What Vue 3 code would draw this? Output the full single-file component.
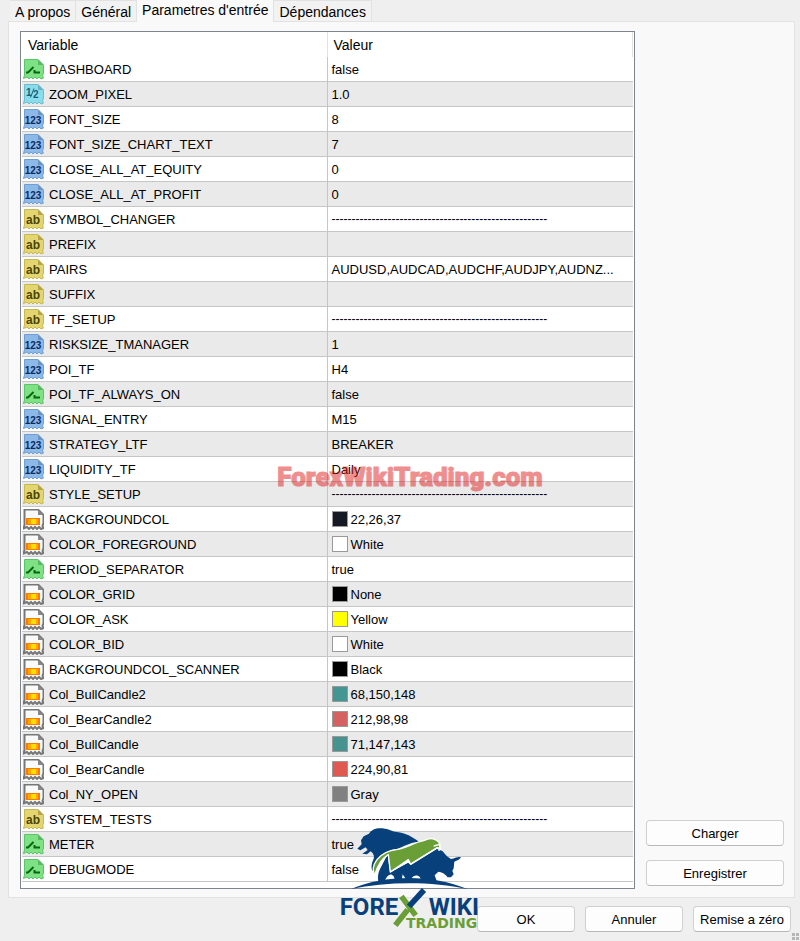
<template>
  <main class="dialog">
    <nav class="tabs" role="tablist">
      <button
        v-for="tab in tabs"
        :key="tab"
        type="button"
        role="tab"
        class="tab"
        :class="{ active: tab === activeTab }"
        :aria-selected="tab === activeTab"
        @click="activeTab = tab"
      >{{ tab }}</button>
    </nav>

    <section class="panel">
      <div class="list">
        <table>
          <thead>
            <tr>
              <th scope="col">Variable</th>
              <th scope="col">Valeur</th>
            </tr>
          </thead>
          <tbody>
            <tr v-for="row in rows" :key="row.name">
              <td>
                <div class="cell">
                  <svg class="icon" :class="row.type" viewBox="0 0 21 21" aria-hidden="true">
                    <path class="sheet" d="M1.5 .5H15L20.5 6V14L19.5 17L20.5 19L18 20L16 18L14 20L12 18L10 20L8 18L6 20L4 18L.5 19.5L1.5 16Z" />
                    <path class="fold" d="M15 .5V6H20.5Z" />
                    <path v-if="row.type === 'bool'" class="mark" d="M3 13.5H5L10.5 8M11.5 11V13.5H17" />
                    <template v-else-if="row.type === 'color'">
                      <rect x="3" y="9" width="14" height="7" fill="#ff7800" />
                      <rect x="5" y="10" width="10" height="5" fill="#ffa800" />
                      <rect x="8" y="10" width="5" height="5" fill="#ffe000" />
                    </template>
                    <template v-else-if="row.type === 'real'">
                      <text class="glyph" x="3" y="12">1</text>
                      <path class="slash" d="M7.5 13.5L11 4.5" />
                      <text class="glyph" x="10" y="14">2</text>
                    </template>
                    <text v-else class="glyph" x="10" y="15" text-anchor="middle">{{ glyphs[row.type] }}</text>
                  </svg>
                  <span>{{ row.name }}</span>
                </div>
              </td>
              <td>
                <div class="cell value" :class="{ dashes: row.value === dashes }">
                  <i v-if="row.swatch" class="swatch" :style="{ background: row.swatch }"></i>
                  <span>{{ row.value }}</span>
                </div>
              </td>
            </tr>
          </tbody>
        </table>
      </div>
      <div class="side">
        <button type="button" class="btn">Charger</button>
        <button type="button" class="btn">Enregistrer</button>
      </div>
    </section>

    <footer class="footer">
      <button type="button" class="btn">OK</button>
      <button type="button" class="btn">Annuler</button>
      <button type="button" class="btn">Remise a zéro</button>
    </footer>

    <span class="watermark">ForexWikiTrading.com</span>

    <svg class="logo" viewBox="0 0 510 378" role="img" aria-label="Forex Wiki Trading">
      <!-- bear -->
      <path fill="#08407c" d="M97 101L110 88L108 76L116 64L132 56C140 42 158 37 180 41C195 43 202 50 216 51C242 54 262 65 281 80C255 82 236 94 216 102C194 103 174 116 162 132L148 160L142 168C138 158 139 145 146 131C149 122 144 114 137 109L126 118L112 116L128 105L122 97L106 106Z" />
      <!-- bull -->
      <path fill="#08407c" d="M160 200C157 184 160 173 165 162L188 118L195 172L255 140L330 100L352 108L366 124L378 132C390 130 398 124 408 127C404 135 396 136 388 140C386 152 388 160 382 167L386 178L378 187L368 187C360 176 350 171 340 170L329 181L336 200H290L285 187C278 178 264 181 260 190L256 200H247L240 188L233 178L231 190L236 200H212L206 184C198 174 187 178 178 200Z" />
      <path fill="#6a9f37" stroke="#fff" stroke-width="4" stroke-linejoin="round" d="M149 181C136 154 156 110 218 103C245 98 270 82 298 76C316 67 332 72 342 82L347 103L338 98L257 148L250 134L196 171L190 119C169 132 157 151 149 181Z" />
      <path fill="none" stroke="#fff" stroke-width="4" d="M196 171L249 140L257 147L337 98M326 93L345 88L342 108" />
      <path fill="#08407c" d="M78 222C180 178 322 178 427 222C320 199 187 199 78 222Z" />
      <g class="forex">
        <text x="44" y="299">FORE</text>
        <text x="311" y="299">WIKI</text>
      </g>
      <path fill="none" stroke="#6a9f37" stroke-width="17" d="M229 244L272 301M211 331L248 284" />
      <path fill="none" stroke="#08407c" stroke-width="17" d="M252 274L297 225" />
      <text class="trading" x="243" y="338">TRADING</text>
    </svg>

    <svg class="grip" viewBox="0 0 8 8" aria-hidden="true">
      <path fill="#b6b6b6" d="M0 0h3v3H0zM4 0h3v3H4zM0 4h3v3H0zM4 4h3v3H4z" />
    </svg>
  </main>
</template>

<script setup>
import { ref } from 'vue';

const tabs = ['A propos', 'Général', "Parametres d'entrée", 'Dépendances'];
const activeTab = ref("Parametres d'entrée");

const glyphs = { int: '123', text: 'ab' };
const dashes = '-'.repeat(54);

const rows = [
  { type: 'bool', name: 'DASHBOARD', value: 'false' },
  { type: 'real', name: 'ZOOM_PIXEL', value: '1.0' },
  { type: 'int', name: 'FONT_SIZE', value: '8' },
  { type: 'int', name: 'FONT_SIZE_CHART_TEXT', value: '7' },
  { type: 'int', name: 'CLOSE_ALL_AT_EQUITY', value: '0' },
  { type: 'int', name: 'CLOSE_ALL_AT_PROFIT', value: '0' },
  { type: 'text', name: 'SYMBOL_CHANGER', value: dashes },
  { type: 'text', name: 'PREFIX', value: '' },
  { type: 'text', name: 'PAIRS', value: 'AUDUSD,AUDCAD,AUDCHF,AUDJPY,AUDNZ...' },
  { type: 'text', name: 'SUFFIX', value: '' },
  { type: 'text', name: 'TF_SETUP', value: dashes },
  { type: 'int', name: 'RISKSIZE_TMANAGER', value: '1' },
  { type: 'int', name: 'POI_TF', value: 'H4' },
  { type: 'bool', name: 'POI_TF_ALWAYS_ON', value: 'false' },
  { type: 'int', name: 'SIGNAL_ENTRY', value: 'M15' },
  { type: 'int', name: 'STRATEGY_LTF', value: 'BREAKER' },
  { type: 'int', name: 'LIQUIDITY_TF', value: 'Daily' },
  { type: 'text', name: 'STYLE_SETUP', value: dashes },
  { type: 'color', name: 'BACKGROUNDCOL', value: '22,26,37', swatch: 'rgb(22, 26, 37)' },
  { type: 'color', name: 'COLOR_FOREGROUND', value: 'White', swatch: 'white' },
  { type: 'bool', name: 'PERIOD_SEPARATOR', value: 'true' },
  { type: 'color', name: 'COLOR_GRID', value: 'None', swatch: 'black' },
  { type: 'color', name: 'COLOR_ASK', value: 'Yellow', swatch: 'yellow' },
  { type: 'color', name: 'COLOR_BID', value: 'White', swatch: 'white' },
  { type: 'color', name: 'BACKGROUNDCOL_SCANNER', value: 'Black', swatch: 'black' },
  { type: 'color', name: 'Col_BullCandle2', value: '68,150,148', swatch: 'rgb(68, 150, 148)' },
  { type: 'color', name: 'Col_BearCandle2', value: '212,98,98', swatch: 'rgb(212, 98, 98)' },
  { type: 'color', name: 'Col_BullCandle', value: '71,147,143', swatch: 'rgb(71, 147, 143)' },
  { type: 'color', name: 'Col_BearCandle', value: '224,90,81', swatch: 'rgb(224, 90, 81)' },
  { type: 'color', name: 'Col_NY_OPEN', value: 'Gray', swatch: 'gray' },
  { type: 'text', name: 'SYSTEM_TESTS', value: dashes },
  { type: 'bool', name: 'METER', value: 'true' },
  { type: 'bool', name: 'DEBUGMODE', value: 'false' },
];
</script>

<style>
body {
  margin: 0;
  background: #efefef;
}
</style>

<style scoped>
.dialog {
  position: relative;
  box-sizing: border-box;
  min-height: 100vh;
  padding: 0 5px 9px 8px;
  background: #efefef;
  color: #000;
  font-family: "Liberation Sans", Arial, sans-serif;
  font-size: 13px;
}
button {
  font: inherit;
  color: inherit;
}
.tabs {
  display: flex;
  align-items: flex-start;
  height: 21px;
  padding-left: 2px;
}
.tab {
  height: 21px;
  padding: 1px 5px 0;
  border: 1px solid #e2e2e2;
  border-width: 1px 1px 0 0;
  background: #f2f2f2;
  font-size: 14px;
  line-height: 20px;
}
.tab.active {
  position: relative;
  height: 22px;
  padding: 0 5px 3px;
  border-top: 0;
  background: #f9f9f9;
  line-height: 18px;
}
.panel {
  display: flex;
  gap: 11px;
  padding: 9px 10px 8px 11px;
  border: 1px solid #e2e2e2;
  background: #f9f9f9;
}
.list {
  flex: 1;
  min-width: 0;
  padding: 0 1px 6px;
  border: 1px solid #7f858f;
  background: #fff;
}
table {
  width: 100%;
  table-layout: fixed;
  border-collapse: separate;
  border-spacing: 0;
}
th {
  height: 24px;
  padding: 1px 6px 0;
  border-right: 1px solid #e2e2e2;
  font-size: 14px;
  font-weight: normal;
  line-height: 24px;
  text-align: left;
}
th:first-child {
  box-sizing: border-box;
  width: calc(50% - 1px);
}
td {
  padding: 0;
  border-bottom: 1px solid #c6c6c6;
}
td:first-child {
  border-right: 1px solid #c6c6c6;
}
tbody tr:nth-child(even) {
  background: #eaeaea;
}
.cell {
  display: flex;
  align-items: center;
  gap: 5px;
  height: 24px;
  padding-left: 1px;
  line-height: 24px;
  white-space: nowrap;
  overflow: hidden;
}
.cell span {
  padding-top: 1px;
  line-height: 23px;
}
.value {
  gap: 3px;
  padding-left: 4px;
}
.dashes {
  font-size: 12px;
}
.swatch {
  box-sizing: border-box;
  width: 16px;
  height: 16px;
  border: 1px solid #999;
}
.icon {
  flex: none;
  width: 21px;
  height: 21px;
}
.glyph {
  font-size: 10px;
  font-weight: bold;
}
.mark {
  fill: none;
  stroke: #07670f;
  stroke-width: 2;
}
.slash {
  stroke: #155f7c;
}
.bool .sheet { fill: #7ee284; stroke: #5cc468; }
.bool .fold { fill: #58b864; }
.real .sheet { fill: #8bdcea; stroke: #68bdd0; }
.real .fold { fill: #68b4c4; }
.real .glyph { fill: #155f7c; }
.int .sheet { fill: #8db9e8; stroke: #6e9fd4; }
.int .fold { fill: #6a94c4; }
.int .glyph { fill: #0b2c62; }
.text .sheet { fill: #e3d670; stroke: #c9b850; }
.text .fold { fill: #b8a444; }
.text .glyph { fill: #4d4208; font-size: 12px; }
.color .sheet { fill: #fafafa; stroke: #777; stroke-width: 2; }
.color .fold { fill: #888; }
.side {
  display: flex;
  flex-direction: column;
  justify-content: flex-end;
  gap: 14px;
  width: 138px;
  padding-bottom: 3px;
}
.btn {
  box-sizing: border-box;
  height: 26px;
  padding: 1px 0 0;
  border: 1px solid #d0d0d0;
  border-bottom-color: #b8b8b8;
  border-radius: 4px;
  background: #fdfdfd;
  line-height: 24px;
}
.footer {
  display: flex;
  justify-content: flex-end;
  gap: 10px;
  padding: 8px 4px 0 0;
}
.footer .btn {
  width: 98px;
}
.watermark {
  position: absolute;
  top: 459px;
  left: calc(50% + 10px);
  transform: translateX(-50%);
  color: #e02020;
  opacity: 0.5;
  font-family: Roboto, "Liberation Sans", sans-serif;
  font-size: 26px;
  font-weight: 900;
  line-height: 36px;
  -webkit-text-stroke: 1px #e02020;
  pointer-events: none;
}
.logo {
  position: absolute;
  bottom: 0;
  left: calc(50% - 75px);
  width: 170px;
  height: 126px;
  pointer-events: none;
}
.forex {
  fill: #08407c;
  font-family: Roboto, sans-serif;
  font-size: 72px;
  font-weight: bold;
}
.trading {
  fill: #6a9f37;
  font-family: "DejaVu Sans", sans-serif;
  font-size: 42px;
  font-weight: bold;
}
.grip {
  position: absolute;
  right: 0;
  bottom: 0;
  width: 8px;
  height: 8px;
}
</style>
